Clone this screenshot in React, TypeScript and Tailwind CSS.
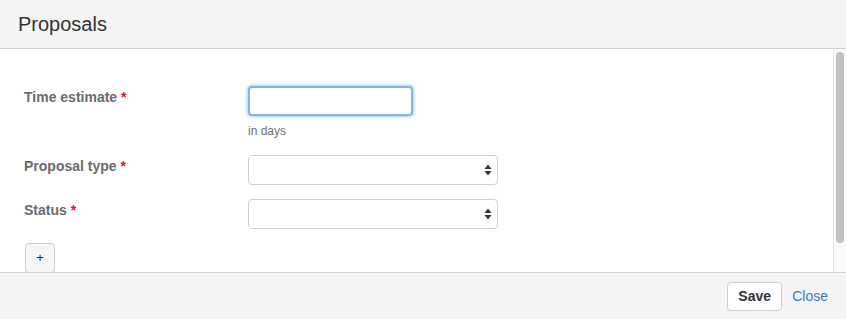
import React from "react";

const font = { fontFamily: '"Liberation Sans", Arial, sans-serif' };

function SelectArrows() {
  return (
    <svg width="8" height="12" viewBox="0 0 8 12" className="text-[#333]">
      <path d="M4 0.5 L7.5 5 L0.5 5 Z" fill="currentColor" />
      <path d="M0.5 7 L7.5 7 L4 11.5 Z" fill="currentColor" />
    </svg>
  );
}

function Label({ children }: { children: React.ReactNode }) {
  return (
    <div className="w-[248px] shrink-0 pl-6 pt-[1px] text-[14px] font-bold text-[#6b6b6b]">
      {children} <span className="text-[#e0101a]">*</span>
    </div>
  );
}

function FakeSelect() {
  return (
    <div className="flex h-[30px] w-[250px] items-center justify-end rounded-[4px] border border-[#cfcfcf] bg-white pr-[5px]">
      <SelectArrows />
    </div>
  );
}

export default function App() {
  return (
    <div className="flex h-[319px] w-[846px] flex-col overflow-hidden bg-white" style={font}>
      <div className="flex h-[49px] shrink-0 items-center border-b border-[#cfcfcf] bg-[#f4f4f4] pl-[18px]">
        <h1 className="text-[20px] leading-none text-[#333]">Proposals</h1>
      </div>

      <div className="flex h-[223px] shrink-0">
        <div className="flex-1 overflow-hidden pt-[37px]">
          <div className="flex">
            <Label>Time estimate</Label>
            <div className="flex flex-col">
              <div className="h-[30px] w-[165px] rounded-[4px] border-2 border-[#7eb8f0] bg-white shadow-[0_0_3px_1px_rgba(102,175,233,0.6)]" />
              <div className="mt-[6px] text-[12px] text-[#707070]">in days</div>
            </div>
          </div>

          <div className="mt-[15px] flex">
            <Label>Proposal type</Label>
            <FakeSelect />
          </div>

          <div className="mt-[14px] flex">
            <Label>Status</Label>
            <FakeSelect />
          </div>

          <div className="mt-[14px] pl-[25px]">
            <div className="flex h-[30px] w-[30px] items-center justify-center rounded-[4px] border border-[#cfcfcf] bg-[#f5f5f5] text-[13px] text-[#222]">
              +
            </div>
          </div>
        </div>

        <div className="flex w-[13px] shrink-0 justify-center border-l border-[#e6e6e6] bg-[#fafafa] pt-[3px]">
          <div className="h-[191px] w-[8px] rounded-full bg-[#c1c1c1]" />
        </div>
      </div>

      <div className="flex flex-1 items-center justify-end gap-[10px] border-t border-[#cfcfcf] bg-[#f4f4f4] pr-[18px]">
        <button className="h-[29px] w-[55px] rounded-[4px] border border-[#cfcfcf] bg-white text-[14px] font-bold text-[#333]">
          Save
        </button>
        <a className="text-[14px] text-[#3a7bc0]">Close</a>
      </div>
    </div>
  );
}
